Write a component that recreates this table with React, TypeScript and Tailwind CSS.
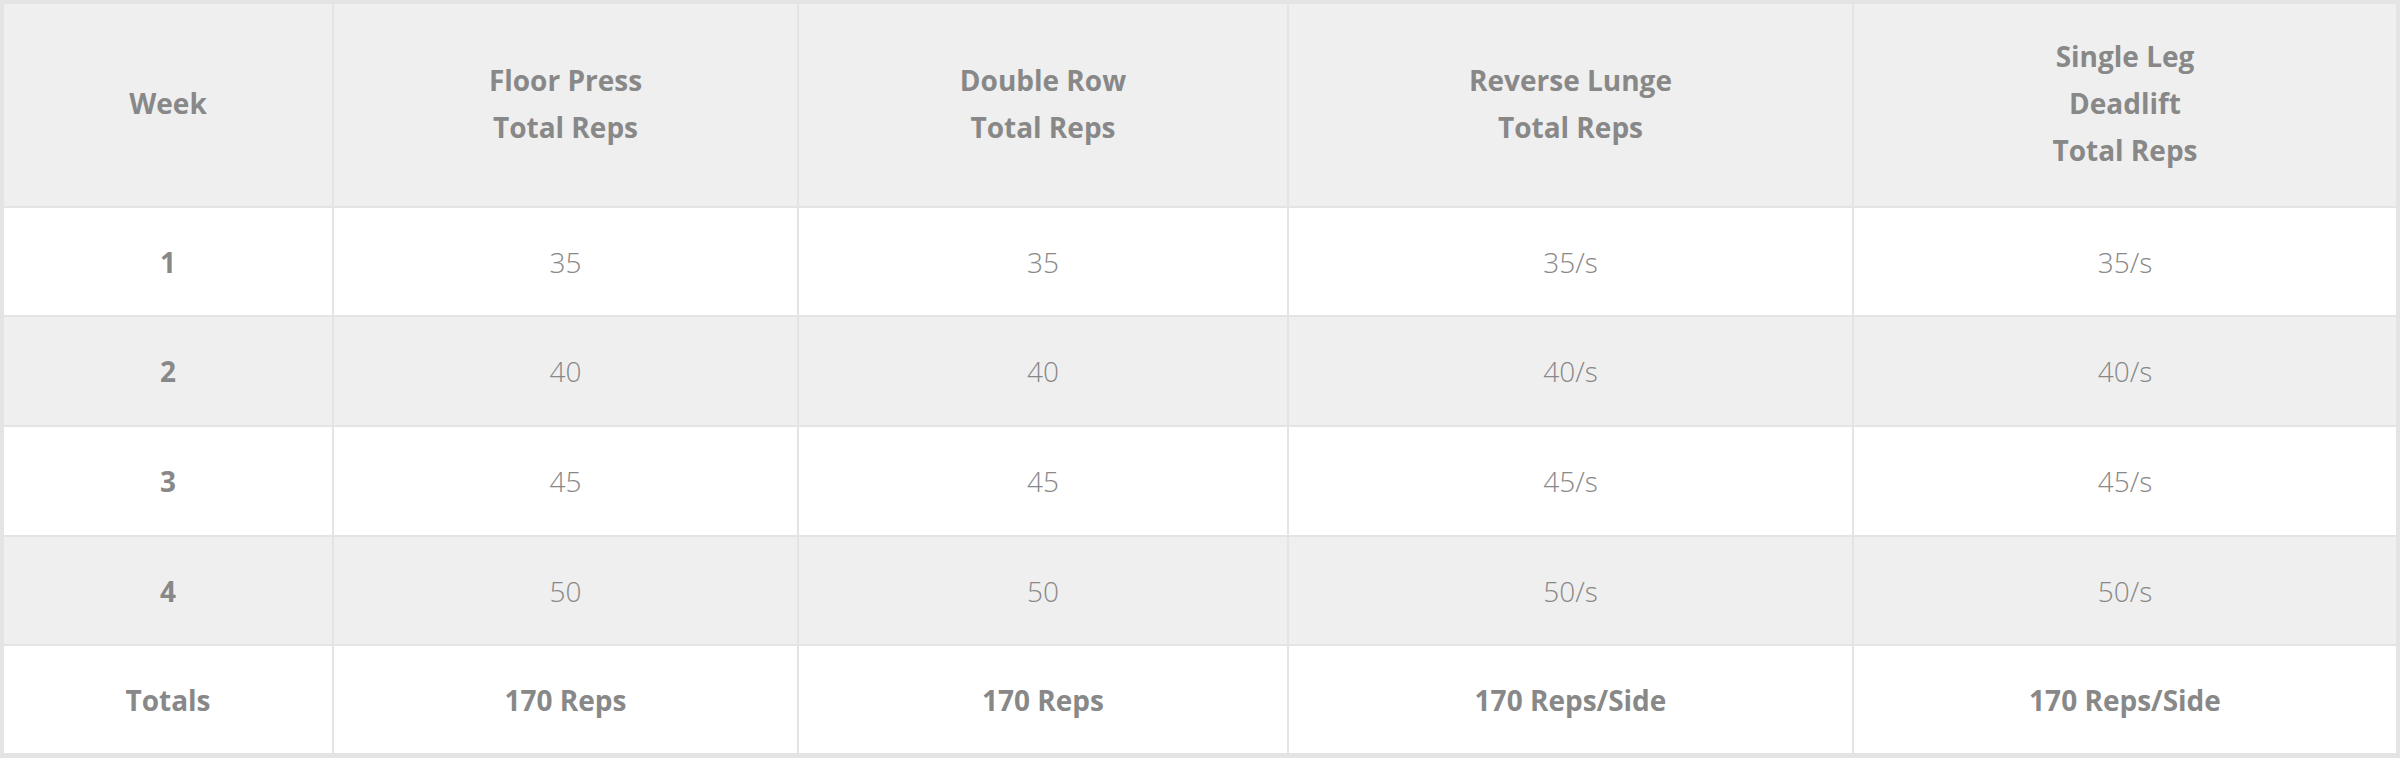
import React from "react";

const headers: string[][] = [
  ["Week"],
  ["Floor Press", "Total Reps"],
  ["Double Row", "Total Reps"],
  ["Reverse Lunge", "Total Reps"],
  ["Single Leg", "Deadlift", "Total Reps"],
];

const rows: string[][] = [
  ["1", "35", "35", "35/s", "35/s"],
  ["2", "40", "40", "40/s", "40/s"],
  ["3", "45", "45", "45/s", "45/s"],
  ["4", "50", "50", "50/s", "50/s"],
];

const totals = ["Totals", "170 Reps", "170 Reps", "170 Reps/Side", "170 Reps/Side"];

export default function App() {
  return (
    <div
      className="w-[2400px] h-[758px] bg-[#e4e4e4] pt-[4px] pb-[5px] px-[4px] text-[#888888] text-[28px]"
      style={{ fontFamily: '"Open Sans", "Noto Sans", sans-serif' }}
    >
      <div className="grid grid-cols-[328px_463px_488px_563px_542px] grid-rows-[202px_107px_108px_108px_107px_107px] gap-[2px] h-full">
        {headers.map((lines, i) => (
          <div
            key={`h${i}`}
            className="bg-[#efefef] flex flex-col items-center justify-center font-bold leading-[47px] text-center pb-[3px]"
          >
            {lines.map((l, j) => (
              <span key={j}>{l}</span>
            ))}
          </div>
        ))}
        {rows.map((r, ri) =>
          r.map((c, ci) => (
            <div
              key={`r${ri}c${ci}`}
              className={`${ri % 2 === 0 ? "bg-white" : "bg-[#efefef]"} flex items-center justify-center text-center ${
                ci === 0 ? "font-bold" : "font-light"
              }`}
            >
              {c}
            </div>
          ))
        )}
        {totals.map((t, i) => (
          <div key={`t${i}`} className="bg-white flex items-center justify-center font-bold text-center">
            {t}
          </div>
        ))}
      </div>
    </div>
  );
}
